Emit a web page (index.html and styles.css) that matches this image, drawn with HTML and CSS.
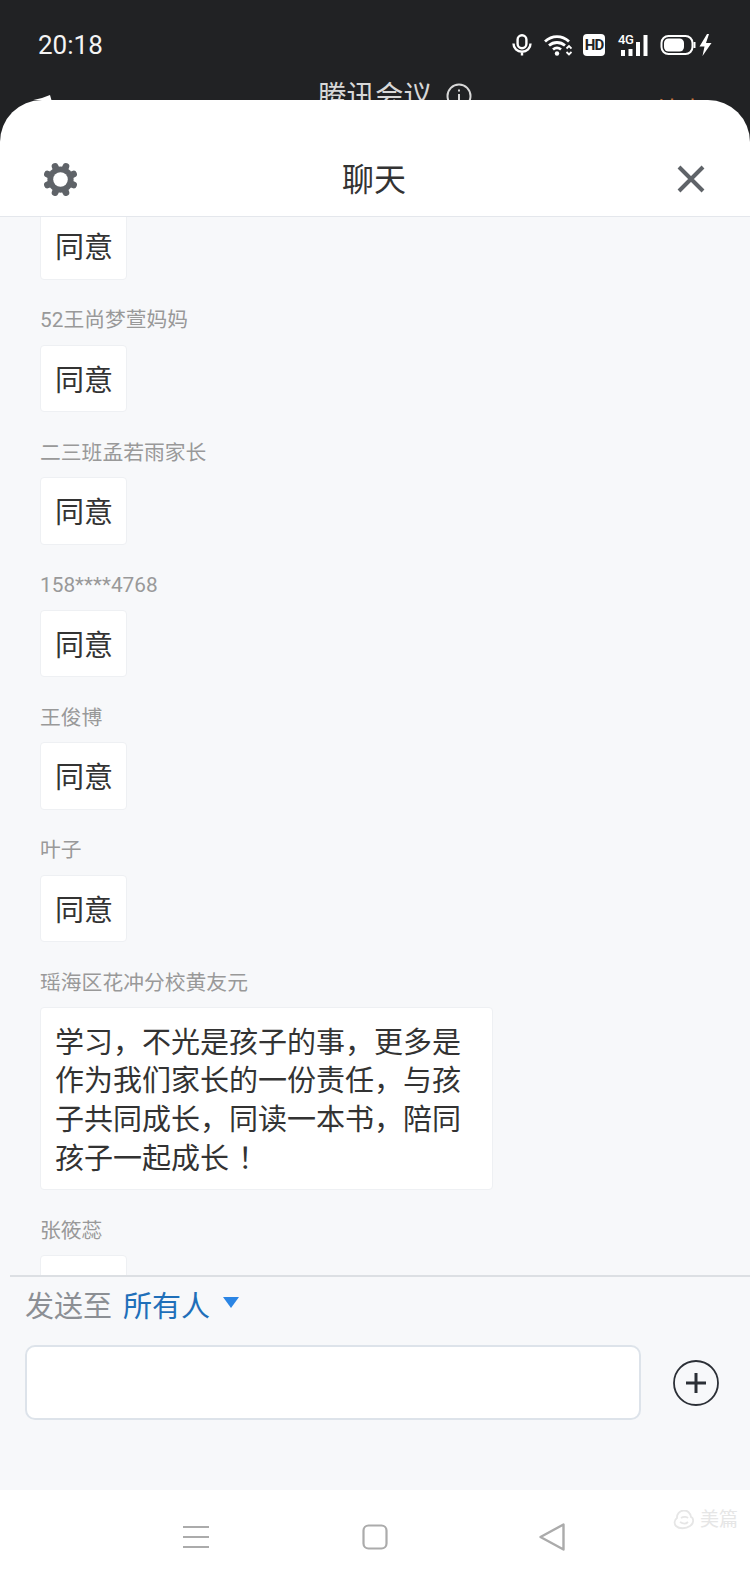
FILE: index.html

```html
<!DOCTYPE html>
<html lang="zh-CN">
<head>
  <meta charset="UTF-8" />
  <meta name="viewport" content="width=device-width, initial-scale=1.0" />
  <title>聊天</title>
  <link rel="stylesheet" href="styles.css">
</head>
<body>
  <div class="top">
    <div class="status-bar">
      <span class="time">20:18</span>
      <div class="status-icons">
        <svg class="icon-mic" width="20" height="22" viewBox="0 0 20 22" fill="none" stroke="#fff" stroke-width="2.4">
          <rect x="5.6" y="1.2" width="8.8" height="13" rx="4.4"/>
          <path d="M1.5 9.5c0 5 3.6 8.2 8.5 8.2s8.5-3.2 8.5-8.2M10 17.7V21.5"/>
        </svg>
        <svg class="icon-wifi" width="28" height="22" viewBox="0 0 28 22" fill="none" stroke="#fff" stroke-width="2.8">
          <path d="M1 7.5C8 1 18 1 25 7.5M5 11.5c4.6-4 11.4-4 16 0M9 15.5c2.7-2.2 5.3-2.2 8 0"/>
          <circle cx="13" cy="19.5" r="2.2" fill="#fff" stroke="none"/>
          <path d="M22.5 14.5l2.5-2.5 2.5 2.5M22.5 18l2.5 2.5 2.5-2.5" stroke-width="1.8"/>
        </svg>
        <span class="hd">HD</span>
        <div class="signal">
          <span class="signal-label">4G</span>
          <svg width="32" height="22" viewBox="0 0 32 22" fill="#fff">
            <rect x="4" y="16" width="4" height="6"/>
            <rect x="11.5" y="15" width="4" height="7"/>
            <rect x="19" y="8" width="4" height="14"/>
            <rect x="26.5" y="1" width="4" height="21"/>
          </svg>
        </div>
        <svg class="icon-battery" width="56" height="22" viewBox="0 0 56 22" fill="none">
          <rect x="1.5" y="2" width="31" height="18" rx="7" stroke="#fff" stroke-width="2"/>
          <rect x="4" y="4.5" width="20" height="13" rx="4.5" fill="#fff"/>
          <path d="M34.5 8v6" stroke="#fff" stroke-width="2"/>
          <path d="M47 0l-7.5 12.5h5L42.5 22l9-13h-5.500L49 0z" fill="#fff"/>
        </svg>
      </div>
    </div>
    <div class="meeting-bar">
      <div class="meeting-left">
        <svg width="40" height="12" viewBox="0 0 40 12" fill="#fff"><path d="M3 12l17-4 8-3 2 7zM38 12l2-2v2z"/></svg>
      </div>
      <span class="meeting-title">腾讯会议</span>
      <div class="meeting-right">
        <svg width="26" height="26" viewBox="0 0 26 26" fill="none" stroke="#d8d8d8" stroke-width="2">
          <circle cx="13" cy="13" r="11.5"/>
          <path d="M13 11v8M13 6.5v2"/>
        </svg>
        <span class="meeting-end">结束</span>
      </div>
    </div>
  </div>

  <div class="sheet">
    <div class="sheet-header">
      <svg class="icon-gear" width="35" height="35" viewBox="0 0 36 36">
        <circle cx="18" cy="18" r="13.5" fill="#5f6368"/>
        <g stroke="#5f6368" stroke-width="7" stroke-linecap="round">
          <path d="M18 3.5V32.5" transform="rotate(22.5 18 18)"/>
          <path d="M18 3.5V32.5" transform="rotate(67.5 18 18)"/>
          <path d="M18 3.5V32.5" transform="rotate(112.5 18 18)"/>
          <path d="M18 3.5V32.5" transform="rotate(157.5 18 18)"/>
        </g>
        <circle cx="18" cy="18" r="7.5" fill="#fff"/>
      </svg>
      <span class="sheet-title">聊天</span>
      <svg class="icon-close" width="28" height="28" viewBox="0 0 28 28" stroke="#5f6368" stroke-width="4">
        <path d="M2 2l24 24M26 2L2 26"/>
      </svg>
    </div>

    <div class="chat">
      <div class="messages">
        <div class="message first">
          <div class="bubble short">同意</div>
        </div>
        <div class="message">
          <div class="name">52王尚梦萱妈妈</div>
          <div class="bubble short">同意</div>
        </div>
        <div class="message">
          <div class="name">二三班孟若雨家长</div>
          <div class="bubble short">同意</div>
        </div>
        <div class="message">
          <div class="name">158****4768</div>
          <div class="bubble short">同意</div>
        </div>
        <div class="message">
          <div class="name">王俊博</div>
          <div class="bubble short">同意</div>
        </div>
        <div class="message">
          <div class="name">叶子</div>
          <div class="bubble short">同意</div>
        </div>
        <div class="message">
          <div class="name">瑶海区花冲分校黄友元</div>
          <div class="bubble long">学习，不光是孩子的事，更多是作为我们家长的一份责任，与孩子共同成长，同读一本书，陪同孩子一起成长<span class="bang">！</span></div>
        </div>
        <div class="message">
          <div class="name">张筱蕊</div>
          <div class="bubble short">&nbsp;</div>
        </div>
      </div>

      <div class="composer">
        <div class="send-to">
          <span class="send-label">发送至</span>
          <span class="send-target">所有人</span>
          <span class="caret"></span>
        </div>
        <div class="input-row">
          <div class="input-box"></div>
          <svg class="icon-plus" width="46" height="46" viewBox="0 0 46 46" fill="none" stroke="#2b2f36">
            <circle cx="23" cy="23" r="22" stroke-width="1.8"/>
            <path d="M13 23h20M23 13v20" stroke-width="3"/>
          </svg>
        </div>
      </div>
    </div>

    <div class="nav-bar">
      <svg width="26" height="24" viewBox="0 0 26 24" stroke="#ababab" stroke-width="2">
        <path d="M0 2h26M0 12h26M0 22h26"/>
      </svg>
      <svg width="26" height="26" viewBox="0 0 26 26" fill="none" stroke="#ababab" stroke-width="2.2">
        <rect x="1.5" y="1.5" width="23" height="23" rx="5"/>
      </svg>
      <svg class="icon-back" width="26" height="28" viewBox="0 0 26 28" fill="none" stroke="#ababab" stroke-width="2.4" stroke-linejoin="round">
        <path d="M24.5 1.5v25L1.500 14z"/>
      </svg>
      <div class="watermark">
        <svg width="22" height="20" viewBox="0 0 22 20" fill="none" stroke="#e6e6e6" stroke-width="1.8">
          <path d="M4 8a7 7 0 0 1 14-1c3 1 3 7-1 9-4 3-11 3-14 0-2-2-2-6 1-8z"/>
          <path d="M8 8c3-2 6-1 7 0M7 12c3 2 6 2 8 0"/>
        </svg>
        <span>美篇</span>
      </div>
    </div>
  </div>
</body>
</html>
```

FILE: styles.css

```css
* { box-sizing: border-box; }
html, body { margin: 0; padding: 0; }
body { width: 750px; height: 1583px; overflow: hidden; background: #212224; font-family: Roboto, "Noto Sans CJK SC", sans-serif; color: #333; }

.top { height: 100px; overflow: hidden; color: #fff; }
.status-bar { height: 78px; padding: 29px 36px 0 38px; display: flex; justify-content: space-between; align-items: flex-start; }
.time { font-size: 26px; line-height: 32px; color: #f4f4f4; }
.status-icons { display: flex; align-items: center; height: 32px; }
.icon-mic { margin-right: 12px; }
.icon-wifi { margin-right: 11px; }
.hd { width: 22px; height: 22px; margin-right: 12px; background: #fff; border-radius: 4px; color: #212224; font-size: 15px; font-weight: 700; letter-spacing: -1px; line-height: 22px; text-align: center; }
.signal { position: relative; width: 32px; height: 22px; margin-right: 11px; }
.signal svg { display: block; }
.signal-label { position: absolute; left: 1px; top: -1px; font-size: 13px; line-height: 14px; font-weight: 500; letter-spacing: -0.5px; }
.icon-battery { margin-right: -2px; }

.meeting-bar { display: grid; grid-template-columns: 1fr auto 1fr; height: 40px; align-items: flex-start; }
.meeting-left { padding: 12px 0 0 22px; }
.meeting-left svg { display: block; }
.meeting-title { font-size: 28.5px; line-height: 36px; margin-top: 1px; color: #d8d8d8; }
.meeting-right { display: flex; justify-content: space-between; padding: 5px 45px 0 14px; }
.meeting-end { font-size: 25px; line-height: 30px; margin-top: 14px; color: #c9763a; }

.sheet { height: 1483px; background: #fff; border-radius: 42px 42px 0 0; display: flex; flex-direction: column; overflow: hidden; }
.sheet-header { height: 117px; flex: none; padding: 61px 45px 0 43px; display: grid; grid-template-columns: 1fr auto 1fr; align-items: flex-start; border-bottom: 1px solid #e4e7ec; }
.sheet-title { font-size: 32px; line-height: 40px; margin-top: -1px; color: #333; }
.icon-gear { margin-top: 1px; }
.icon-close { margin-top: 4px; justify-self: end; }

.chat { flex: 1; min-height: 0; background: #f7f8fa; display: flex; flex-direction: column; }
.messages { flex: 1; min-height: 0; overflow: hidden; padding-left: 40px; }
.message { padding-bottom: 25.6px; }
.message.first { margin-top: -5px; }
.name { font-size: 20.8px; line-height: 30px; margin-bottom: 9.5px; color: #999; }
.bubble { background: #fff; border: 1px solid #eef0f3; border-radius: 4px; font-size: 29px; color: #333; }
.bubble.short { width: 87px; height: 67.5px; line-height: 71px; padding-left: 14px; }
.bubble.long { width: 453px; margin-top: -1px; padding: 16px 14px 11px; line-height: 38.7px; }
.bang { margin-left: 9px; }

.composer { height: 215px; flex: none; margin-left: 10px; border-top: 2px solid #dcdfe3; padding: 0 0 0 15px; }
.send-to { display: flex; align-items: center; height: 58px; padding-bottom: 4px; font-size: 29px; }
.send-label { color: #8c8f94; margin-right: 11px; }
.send-target { color: #1f6fb9; margin-right: 13px; }
.caret { width: 0; height: 0; margin-top: -3px; border-left: 8.5px solid transparent; border-right: 8.5px solid transparent; border-top: 11px solid #2b85e4; }
.input-row { display: flex; align-items: center; margin-top: 10px; }
.input-box { width: 616px; height: 75px; background: #fff; border: 2px solid #dde3ea; border-radius: 10px; }
.icon-plus { margin-left: 32px; margin-top: 1px; }

.nav-bar { position: relative; height: 93px; flex: none; background: #fff; display: flex; justify-content: center; align-items: center; gap: 153px; }
.icon-back { margin-left: -2px; margin-right: 2px; }
.watermark { position: absolute; right: 12px; top: 18px; display: flex; align-items: center; gap: 5px; font-size: 19px; line-height: 24px; color: #e6e6e6; }
```
